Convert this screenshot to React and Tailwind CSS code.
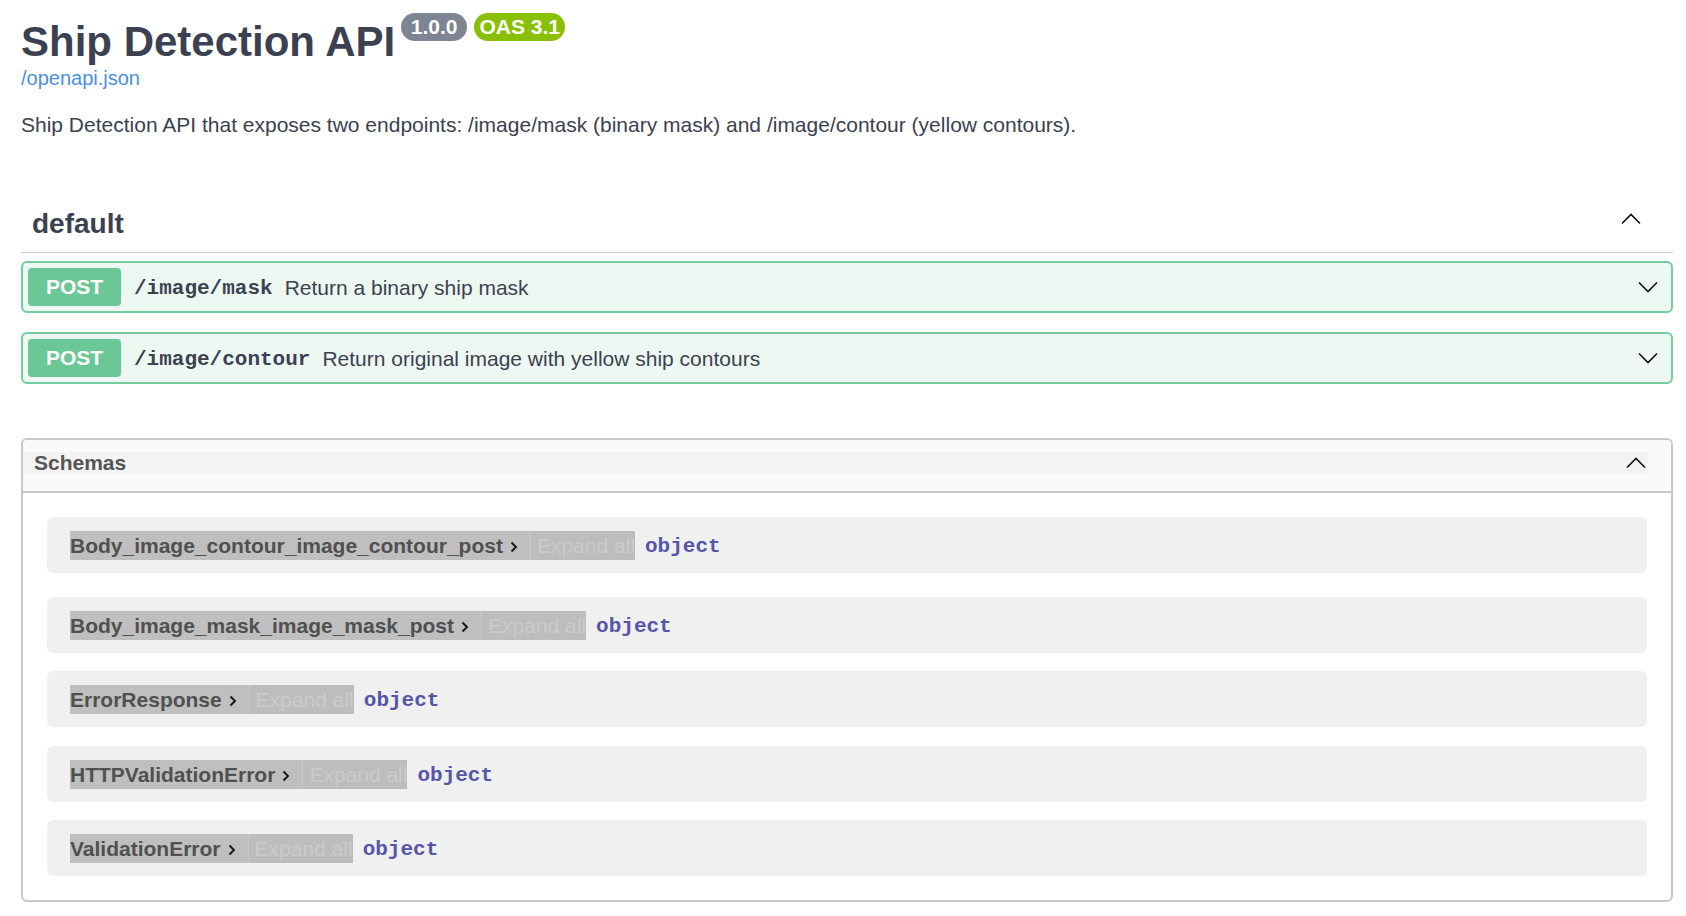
import React from 'react'

const sans = { fontFamily: '"Liberation Sans", Arial, sans-serif' }
const mono = { fontFamily: '"Liberation Mono", "Courier New", monospace' }

function Chevron({ dir = 'down', className = '' }) {
    const pts = dir === 'down' ? '1,1.5 10,10.5 19,1.5' : '1,10.5 10,1.5 19,10.5'
    return (
        <svg width="20" height="12" viewBox="0 0 20 12" className={className}>
            <polyline points={pts} fill="none" stroke="#111" strokeWidth="1.6" />
        </svg>
    )
}

function Operation({ path, summary }) {
    return (
        <div className="flex items-center border-2 border-[#74cd9c] bg-[#edf8f2] rounded-[6px] p-[5px] pr-[13px]">
            <span className="w-[93px] h-[38px] rounded-[4px] bg-[#6cc796] text-white font-bold text-[21px] flex items-center justify-center">
                POST
            </span>
            <span className="ml-[13px] mt-[3px] font-bold text-[21px] text-[#3b4151]" style={mono}>
                {path}
            </span>
            <span className="ml-[12px] mt-[1px] text-[21px] text-[#3b4151] flex-1">{summary}</span>
            <Chevron dir="down" />
        </div>
    )
}

function Model({ name, className = '' }) {
    return (
        <div className={`h-[56px] rounded-[6px] bg-[#f0f0f0] pl-[23px] flex items-center ${className}`}>
            <span className="h-[29px] leading-[29px] bg-[#bfbfbf] flex items-center pr-[12px] text-[21px] font-bold text-[#505050]">
                {name}
                <svg width="8" height="12" viewBox="0 0 8 12" className="ml-[7px] mt-[3px]">
                    <polyline points="1.5,1.5 6,6 1.5,10.5" fill="none" stroke="#1a1a1a" strokeWidth="2" />
                </svg>
            </span>
            <span className="h-[29px] leading-[29px] bg-[#bdbdbd] border-l border-[#c9c9c9] pl-[6px] text-[21px] text-[#cbcbcb]">
                Expand all
            </span>
            <span className="ml-[10px] mt-[4px] text-[21px] font-bold text-[#5555aa]" style={mono}>
                object
            </span>
        </div>
    )
}

export default function App() {
    return (
        <div className="min-h-screen bg-white pl-[21px] pr-[13px] pt-[17px] pb-[20px]" style={sans}>
            {/* Info */}
            <div className="flex items-start">
                <h2 className="text-[42px] leading-[49px] font-bold text-[#3b4151]">Ship Detection API</h2>
                <span className="ml-[6px] -mt-[4px] w-[66px] h-[28px] rounded-full bg-[#7d8492] text-white font-bold text-[21px] leading-[27px] text-center">
                    1.0.0
                </span>
                <span className="ml-[7px] -mt-[4px] w-[91px] h-[28px] rounded-full bg-[#89bf04] text-white font-bold text-[21px] leading-[27px] text-center">
                    OAS 3.1
                </span>
            </div>
            <a className="block text-[20px] leading-[24px] text-[#4a90e2]">/openapi.json</a>
            <p className="mt-[23px] text-[21px] leading-[24px] text-[#3b4151]">
                Ship Detection API that exposes two endpoints: /image/mask (binary mask) and /image/contour (yellow contours).
            </p>

            {/* default tag */}
            <div className="mt-[60px] flex items-center justify-between border-b border-[#c9cbcf] pt-[10px] pb-[11px] pl-[11px] pr-[32px]">
                <h3 className="text-[28px] leading-[34px] font-bold text-[#3b4151]">default</h3>
                <Chevron dir="up" className="mb-[10px]" />
            </div>
            <div className="mt-[8px] flex flex-col gap-[19px]">
                <Operation path="/image/mask" summary="Return a binary ship mask" />
                <Operation path="/image/contour" summary="Return original image with yellow ship contours" />
            </div>

            {/* Schemas */}
            <section className="mt-[54px] rounded-[6px] border-2 border-[#c6c8cc] overflow-hidden">
                <div className="bg-[#fafafa] pt-[12px] pb-[17px] pr-[23px] border-b-2 border-[#c6c8cc]">
                    <div className="h-[22px] bg-[#f3f3f3] pl-[11px] pr-[2px] flex items-center justify-between">
                        <span className="text-[21px] font-bold text-[#555]">Schemas</span>
                        <Chevron dir="up" />
                    </div>
                </div>
                <div className="px-[24px] pt-[24px] pb-[24px]">
                    <Model name="Body_image_contour_image_contour_post" className="mb-[24px]" />
                    <Model name="Body_image_mask_image_mask_post" className="mb-[18px]" />
                    <Model name="ErrorResponse" className="mb-[19px]" />
                    <Model name="HTTPValidationError" className="mb-[18px]" />
                    <Model name="ValidationError" />
                </div>
            </section>
        </div>
    )
}
